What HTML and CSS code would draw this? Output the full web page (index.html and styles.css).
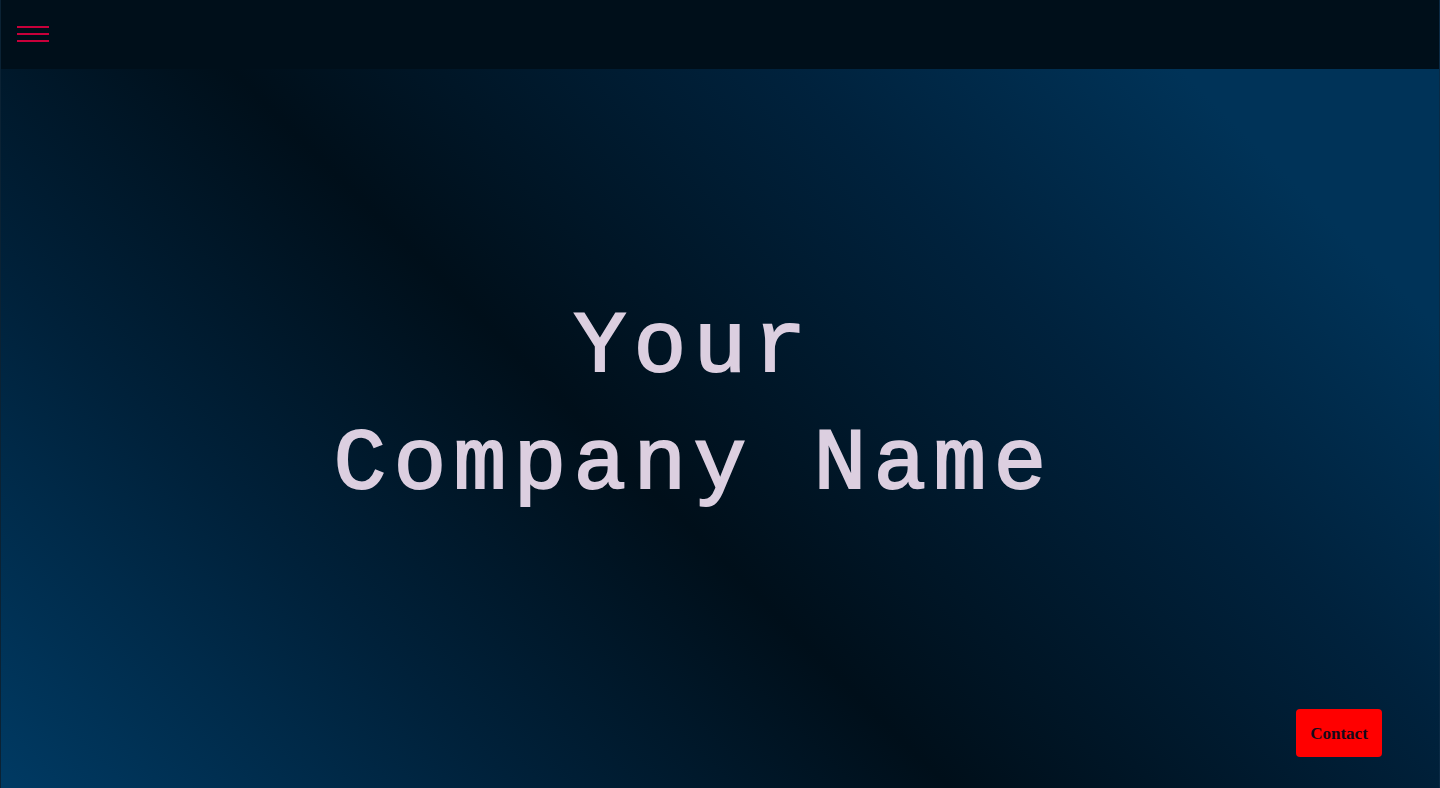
FILE: index.html
```html
<!DOCTYPE html>
<html lang="en">
<head>
<meta charset="utf-8">
<title>Your Company Name</title>
<link rel="stylesheet" href="styles.css">
</head>
<body>
<div class="page">
  <header class="topbar">
    <button class="menu-btn" aria-label="Menu">
      <span class="bar"></span>
      <span class="bar"></span>
      <span class="bar"></span>
    </button>
  </header>
  <main class="hero">
    <h1 class="title">Your<br>Company Name</h1>
  </main>
</div>
<button class="contact-btn">Contact</button>
</body>
</html>
```

FILE: styles.css
```css
html, body {
  margin: 0;
  padding: 0;
  height: 100%;
}

body {
  background: #000f1a;
  overflow: hidden;
}

.page {
  display: flex;
  flex-direction: column;
  height: 788px;
  border-left: 1px solid #0b2234;
  border-right: 1px solid #0b2a44;
  box-sizing: border-box;
}

.topbar {
  height: 69px;
  flex: none;
  background: #000f1a;
  display: flex;
  align-items: flex-start;
  padding: 26px 0 0 16px;
  box-sizing: border-box;
}

.menu-btn {
  background: none;
  border: 0;
  padding: 0;
  width: 32px;
  display: flex;
  flex-direction: column;
  gap: 5px;
  cursor: pointer;
}

.menu-btn .bar {
  display: block;
  width: 32px;
  height: 2px;
  background: #c8003a;
}

.hero {
  flex: 1;
  display: flex;
  align-items: center;
  justify-content: center;
  padding: 0 53px 45px 0;
  background: linear-gradient(45deg, #003a63 0%, #00213a 24%, #000f1a 44%, #00223d 70%, #003358 88%, #003358 100%);
}

.title {
  margin: 0;
  width: 900px;
  text-align: center;
  font-family: "Liberation Mono", "Courier New", monospace;
  font-weight: normal;
  font-size: 88px;
  letter-spacing: 7.2px;
  line-height: 117px;
  color: #dccfe0;
  -webkit-text-stroke: 2px #dccfe0;
}

.contact-btn {
  position: fixed;
  right: 58px;
  bottom: 31px;
  width: 86px;
  height: 48px;
  padding: 2px 0 0;
  border: 0;
  border-radius: 4px;
  background: #ff0000;
  color: #140a1a;
  font-family: "Liberation Serif", "Times New Roman", serif;
  font-weight: bold;
  font-size: 17px;
  cursor: pointer;
}
```
